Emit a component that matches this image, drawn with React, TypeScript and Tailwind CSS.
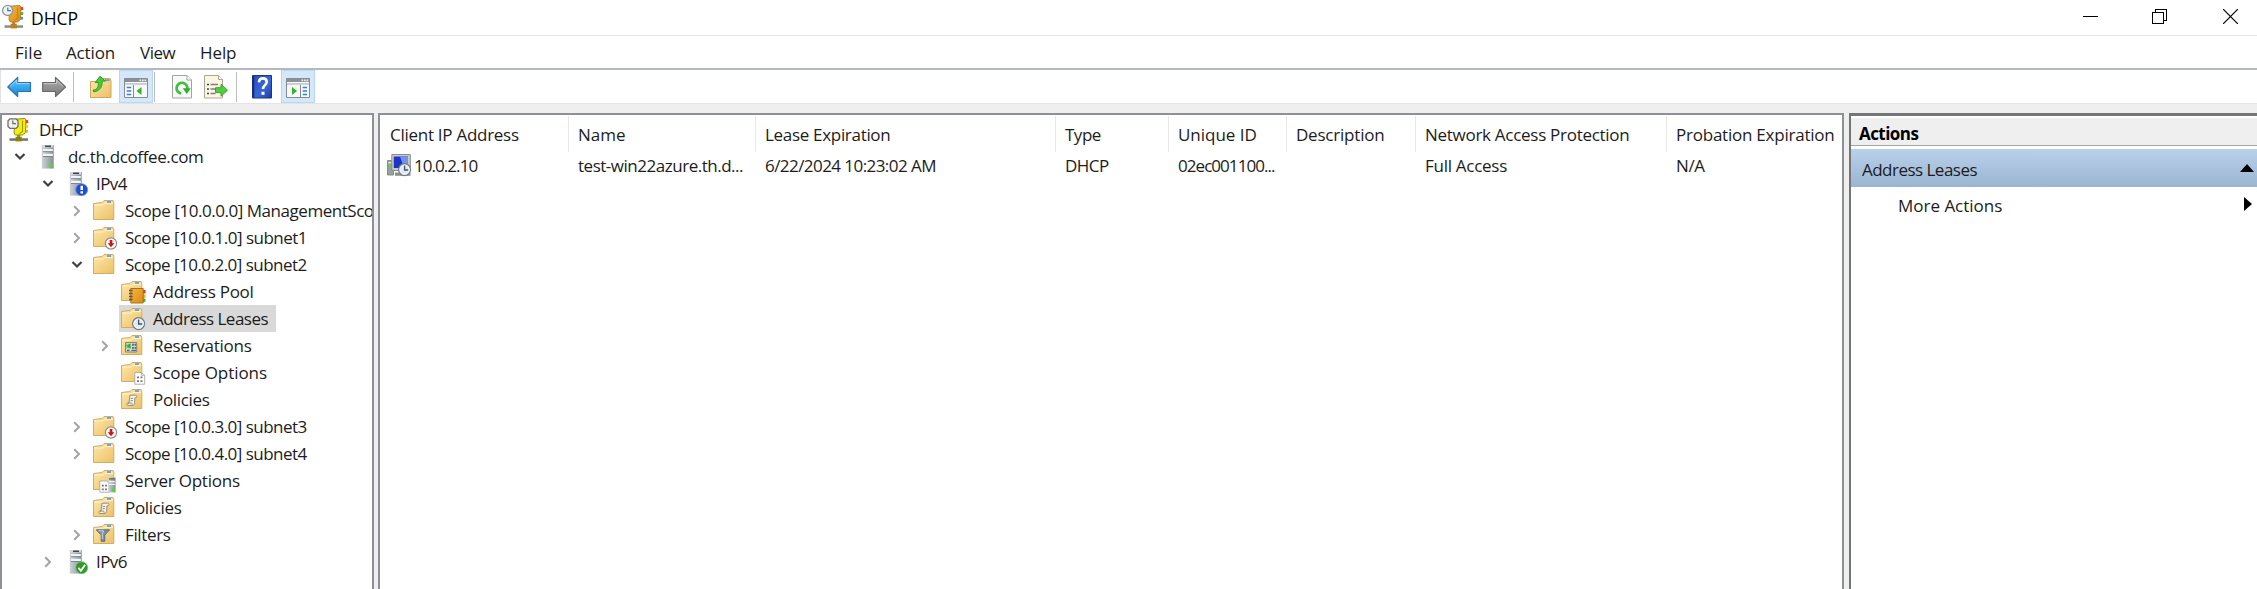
import type { ReactNode } from 'react'

function Gradients() {
  return (
    <svg className="absolute size-0" aria-hidden="true">
      <defs>
        <linearGradient id="folder" x1="0" y1="0" x2="1" y2="1">
          <stop offset="0" stopColor="#ffe8a9" />
          <stop offset="1" stopColor="#ebc067" />
        </linearGradient>
        <linearGradient id="steel" x1="0" y1="0" x2="1" y2="0">
          <stop offset="0" stopColor="#cdd3d7" />
          <stop offset="0.5" stopColor="#a9b2b8" />
          <stop offset="1" stopColor="#848e95" />
        </linearGradient>
        <linearGradient id="blueArrow" x1="0" y1="0" x2="0" y2="1">
          <stop offset="0" stopColor="#6cc5f5" />
          <stop offset="0.5" stopColor="#35aaf0" />
          <stop offset="1" stopColor="#1583d0" />
        </linearGradient>
        <linearGradient id="grayArrow" x1="0" y1="0" x2="0" y2="1">
          <stop offset="0" stopColor="#b0b0b0" />
          <stop offset="1" stopColor="#777777" />
        </linearGradient>
        <linearGradient id="book" x1="0" y1="0" x2="1" y2="1">
          <stop offset="0" stopColor="#2a4fb8" />
          <stop offset="0.6" stopColor="#3a66d6" />
          <stop offset="1" stopColor="#1d3b9a" />
        </linearGradient>
        <linearGradient id="orange" x1="0" y1="0" x2="1" y2="1">
          <stop offset="0" stopColor="#f6b53c" />
          <stop offset="1" stopColor="#d98a14" />
        </linearGradient>
      </defs>
    </svg>
  )
}

function Svg({ children }: { children: ReactNode }) {
  return (
    <svg viewBox="0 0 24 24" className="size-6 shrink-0 overflow-visible">
      {children}
    </svg>
  )
}

function FolderShape() {
  return (
    <>
      <path d="M.5 3.500 9 2.500l2-2h9l.8 2V19.500H.5z" fill="url(#folder)" stroke="#d3ab62" strokeWidth="1" />
      <path d="M11.500 1.300h8.300v2.200h-9.300z" fill="#f5dfae" />
      <path d="M14 1.200h4v1.600h-4z" fill="#4a9bea" />
      <path d="M1.300 5h9l1.400-1.400h8.400" fill="none" stroke="#fff3cd" strokeWidth="1" />
    </>
  )
}

function ServerShape() {
  return (
    <>
      <path d="M5.800 0h11.900v23.600H5.800z" fill="url(#steel)" />
      <path d="M6.500 0h10.500v2.500H6.500z" fill="#d3d9dd" />
      <path d="M9 .5h6v1.500H9z" fill="#3f474c" />
      <path d="M7 4h9.800v2.200H7zM7 8.800h9.800V11H7z" fill="#f1f5f7" />
      <path d="M7 6.200h9.800v.9H7zM7 11h9.800v.9H7z" fill="#7a858c" />
    </>
  )
}

function ClockBadge() {
  return (
    <>
      <circle cx="17.600" cy="15.600" r="5.900" fill="#dfe9f2" stroke="#747d84" strokeWidth="1.400" />
      <circle cx="17.600" cy="15.600" r="4.700" fill="none" stroke="#fff" strokeWidth="0.900" />
      <path d="M17.600 11.600v4.400h3.600" fill="none" stroke="#3b5570" strokeWidth="1.300" />
    </>
  )
}

function DhcpIcon({ yellow }: { yellow?: boolean }) {
  return (
    <Svg>
      <path d="M10.200 16h3v4h-3z" fill="#8a8a83" />
      <path d="M2.500 20.300h18.500v2.500H2.500z" fill={yellow ? '#73736a' : '#8b8b88'} />
      <path d="M8.600 18.800h6.200v4.600H8.600z" fill={yellow ? '#8a8200' : '#c27f16'} />
      <path d="M8 1.200 18 .5l1 1.500-.6 12.800-3 2.200H8.400L7 14.500z" fill={yellow ? '#f4ee12' : 'url(#orange)'} stroke={yellow ? '#87800b' : '#b67a1d'} strokeWidth="0.900" />
      <path d="M15.500 2.500v11l-3 2" fill="none" stroke={yellow ? '#a59c00' : '#c7831a'} strokeWidth="1.100" />
      <path d="M18.800 2h2l.7 2.800-2.700.6z" fill="#ee3d31" />
      <path d="M18.800 7h2.400v3h-2.400z" fill={yellow ? '#dede10' : '#55b13f'} />
      <path d="M18.600 11.800h2.300v2.800h-2.300z" fill={yellow ? '#c5be09' : '#3d8fdd'} />
      {yellow ? (
        <path d="M3 .8h6l2 2v5.600l-2 2H3l-2-2V2.800z" fill="#f1f2ee" stroke="#6d6d69" strokeWidth="1.300" />
      ) : (
        <circle cx="5.600" cy="5.400" r="5" fill="#edf4f8" stroke="#8a98a1" strokeWidth="1.300" />
      )}
      <path d="M5.800 2.400v3.300h3.200" fill="none" stroke="#5f6d76" strokeWidth="1.200" />
    </Svg>
  )
}

function ServerIcon() {
  return (
    <Svg>
      <ServerShape />
      <path d="M12.700 19.200h3.700v2.700h-3.700z" fill="#55e019" />
    </Svg>
  )
}

function Ipv4Icon() {
  return (
    <Svg>
      <ServerShape />
      <circle cx="17.700" cy="17.700" r="6" fill="#1f4fd0" stroke="#6f8fdc" strokeWidth="0.800" />
      <path d="M16.500 13.800h2.500v4.300h-2.500zM16.500 19.200h2.500v2.200h-2.500z" fill="#fff" />
    </Svg>
  )
}

function Ipv6Icon() {
  return (
    <Svg>
      <ServerShape />
      <circle cx="17.700" cy="17.700" r="6" fill="#2c9c27" stroke="#7fbd78" strokeWidth="0.800" />
      <path d="m14.400 17.800 2.500 2.900 4.200-5.800" fill="none" stroke="#fff" strokeWidth="1.800" />
    </Svg>
  )
}

function FolderIcon() {
  return (
    <Svg>
      <FolderShape />
    </Svg>
  )
}

function DownFolderIcon() {
  return (
    <Svg>
      <FolderShape />
      <circle cx="18" cy="16.500" r="5.600" fill="#fff" stroke="#8e8e8e" strokeWidth="1.200" />
      <path d="M16.700 13h2.700v3.300h2L18 20.200l-3.300-3.900h2z" fill="#d21414" />
    </Svg>
  )
}

function PoolIcon() {
  return (
    <Svg>
      <FolderShape />
      <path d="M22 9h2.600v3.500H22z" fill="#e33a2c" />
      <path d="M22 13.600h2.600v3.200H22z" fill="#e8b32b" />
      <path d="M22 17.600h2.400v3.200H22z" fill="#4aa04a" />
      <path d="M9.800 7.500h12.400V22H9.800z" fill="url(#orange)" stroke="#a86f16" strokeWidth="1" />
      <path d="M8 9.500h3.600M8 12.500h3.600M8 15.500h3.600M8 18.500h3.600" stroke="#5b5448" strokeWidth="1.300" />
    </Svg>
  )
}

function LeasesIcon() {
  return (
    <Svg>
      <FolderShape />
      <ClockBadge />
    </Svg>
  )
}

function ReservationsIcon() {
  return (
    <Svg>
      <FolderShape />
      <path d="M4.500 7.500h11.200v9.500H4.500z" fill="#d3d8d8" stroke="#7d7a68" strokeWidth="0.900" />
      <path d="M5.200 8.800h4.800v4.800H5.200z" fill="#8ed284" />
      <path d="M9.500 8.600v4.800L5.200 11z" fill="#2fae26" />
      <path d="M11 8.800h1.800v2H11zM13.500 8.800h1.600v2h-1.600zM11 12h1.800v1.800H11zM13.500 12h1.600v1.800h-1.600zM6 14.800h2.500v1.200H6zM10.500 14.800h4.500v1.200h-4.500z" fill="#4d6682" />
    </Svg>
  )
}

function ScopeOptionsIcon() {
  return (
    <Svg>
      <FolderShape />
      <path d="M13.800 10.500h6.700l3.200 2.800v8.900h-9.900z" fill="#fff" stroke="#a9a9a9" strokeWidth="0.900" />
      <path d="M20.500 10.500v2.800h3.200" fill="none" stroke="#a9a9a9" strokeWidth="0.900" />
      <path d="M16 14.500h2v1.700h-2zM19.500 14.500h2v1.700h-2zM16 18.300h2V20h-2zM19.500 18.300h2V20h-2z" fill="#777" />
    </Svg>
  )
}

function PoliciesIcon() {
  return (
    <Svg>
      <FolderShape />
      <path d="M9 6.200h5.600c1.700.1 1.800 2.300.3 2.600h-1l-.3 5.700c-.3 1.300-1 2-2.300 2H7c-1.600-.2-1.600-2.200-.2-2.500H8z" fill="#f2f1ec" stroke="#8d8775" strokeWidth="0.900" />
      <path d="M7 14.100h3.500c.8 0 .9 1.500.3 2.200M9.800 9.500h2.300M9.600 11.600h2.300" fill="none" stroke="#8d8775" strokeWidth="0.900" />
    </Svg>
  )
}

function ServerOptionsIcon() {
  return (
    <Svg>
      <FolderShape />
      <path d="M6.800 11h6.500l3 2.500v8.700H6.800z" fill="#fff" stroke="#a9a9a9" strokeWidth="0.900" />
      <path d="M8.800 14.800h2v1.700h-2zM12 14.800h2v1.700h-2zM8.800 18.500h2v1.700h-2zM12 18.500h2v1.700h-2z" fill="#777" />
      <path d="M15.200 7.500h7.400v14.900h-7.400z" fill="url(#steel)" />
      <path d="M16 8.300h5.800v1.200H16z" fill="#566068" />
      <path d="M16 11h5.800v1.200H16zM16 13.800h5.800V15H16z" fill="#f1f4f6" />
      <path d="M18.700 18.700h3.200v2.500h-3.200z" fill="#51dc1b" />
    </Svg>
  )
}

function FiltersIcon() {
  return (
    <Svg>
      <FolderShape />
      <path d="M3.200 5.800h13.400L11.800 11v6.300H8.200V11z" fill="#7690a6" stroke="#52687b" strokeWidth="0.900" />
      <path d="M5.500 6.800h5L9.300 10v5" fill="none" stroke="#c9d8e3" strokeWidth="1" />
    </Svg>
  )
}

function ClientIcon() {
  return (
    <Svg>
      <path d="M.5 6.500h6V21h-6z" fill="#9ba0a1" stroke="#73787a" strokeWidth="0.800" />
      <path d="M1.300 8h4v1.400h-4z" fill="#dfe3e3" />
      <path d="M1.500 10.500h2.600v2H1.500z" fill="#4fe01d" />
      <path d="M4.800.5h18.500v16H4.800z" fill="#c9c9c6" stroke="#8b8b89" strokeWidth="1" />
      <path d="M6.800 2.500h14.200V14H6.800z" fill="#1c35c9" />
      <path d="m13 2.500 8 0V14h-4z" fill="#6f93ef" />
      <path d="M8 18.500h15.500v3.300H8z" fill="#8a8f93" />
      <ClockBadge />
    </Svg>
  )
}

function BackIcon() {
  return (
    <Svg>
      <path d="M.8 12 10.700 2.500v5H23.500v9H10.700v5z" fill="url(#blueArrow)" stroke="#2c73a8" strokeWidth="1.200" strokeLinejoin="round" />
      <path d="M3 11.500 9.700 5v3.600h12.700" fill="none" stroke="#a5defa" strokeWidth="0.900" />
    </Svg>
  )
}

function ForwardIcon() {
  return (
    <Svg>
      <path d="M23.500 12 13.500 2.500v5H.7v9h12.800v5z" fill="url(#grayArrow)" stroke="#686868" strokeWidth="1.200" strokeLinejoin="round" />
      <path d="M1.800 8.600h12.800V5l6.600 6.400" fill="none" stroke="#c9c9c9" strokeWidth="0.900" />
    </Svg>
  )
}

function UpFolderIcon() {
  return (
    <Svg>
      <path d="M1.500 6.500h9l2-3h8.600l.9 2.500V22.500H1.500z" fill="url(#folder)" stroke="#cfa65d" />
      <path d="M16 4.300h4.500v1.600H16z" fill="#4a9bea" />
      <path d="M4 15.200c4.200-.4 5.600-3 5.400-7.600H6.200L11 1.200l5.400 4.900h-3.300c.5 6-2.400 9.900-8.300 10.800z" fill="#49cb35" stroke="#279a1b" strokeWidth="0.900" />
    </Svg>
  )
}

function PaneIcon({ right }: { right?: boolean }) {
  return (
    <Svg>
      <path d="M.5 3.500h23v19H.5z" fill="#f7f8f9" stroke="#868b90" />
      <path d="M1 4h22v3H1z" fill="#8b9197" />
      <path d="M1 8h22v1.800H1z" fill="#c6cbd0" />
      <path d="M15.500 4.500h1.700v1.700h-1.700zM18 4.500h1.700v1.700H18zM20.500 4.500h1.700v1.700h-1.700z" fill="#e9edf0" />
      {right ? (
        <>
          <path d="M14.500 10v12.500" stroke="#868b90" />
          <path d="M16.700 12.500h4.300M16.700 16h4.300M16.700 19.500h4.300" stroke="#3b7fd0" strokeWidth="1.700" />
          <path d="M6 12v8l5-4z" fill="#35b324" />
        </>
      ) : (
        <>
          <path d="M9.500 10v12.500" stroke="#868b90" />
          <path d="M2.700 12.500h4.500M2.700 16h4.500M2.700 19.500h4.500" stroke="#3b7fd0" strokeWidth="1.700" />
          <path d="M17.500 12v8l-5-4z" fill="#35b324" />
        </>
      )}
    </Svg>
  )
}

function RefreshIcon() {
  return (
    <Svg>
      <path d="M2.500.5h14.500l4.500 4.500v18h-19z" fill="#f8f8f6" stroke="#a3a3a3" />
      <path d="M17 .5V5h4.500" fill="#fff" stroke="#a3a3a3" />
      <path d="M11.200 18.500A5.400 5.400 0 1 1 17.300 14" fill="none" stroke="#3fc040" strokeWidth="2.700" />
      <path d="m12.800 13.300h8l-4 5.700z" fill="#2dae2c" />
    </Svg>
  )
}

function ExportIcon() {
  return (
    <Svg>
      <path d="M1.500.5h14l4 4v18.500h-18z" fill="#fbf6df" stroke="#aaa69a" />
      <path d="M15.500.5v4h4" fill="#fff" stroke="#aaa69a" />
      <path d="M4 9.500h2M4 14h2M4 18.500h2" stroke="#444" strokeWidth="1.500" />
      <path d="M7.500 9.500h7.500M7.500 14h5M7.500 18.500h5" stroke="#7d7d8c" strokeWidth="1.300" />
      <path d="M12.500 12.700h5.500V9.200l6.500 6-6.500 6v-3.600h-5.500z" fill="#52cc3f" stroke="#2f9e22" strokeWidth="0.900" />
    </Svg>
  )
}

function HelpIcon() {
  return (
    <Svg>
      <path d="M2.500.5h19V23h-19z" fill="url(#book)" stroke="#1b358a" />
      <path d="M3.500 1v21.500" stroke="#152c78" strokeWidth="1.600" />
      <path d="M9 7.400c.1-2.600 1.500-4 3.800-4 2.400 0 3.900 1.400 3.900 3.500 0 3.300-3.700 3.300-3.700 7.200" fill="none" stroke="#fff" strokeWidth="2.600" />
      <path d="M11.500 16.800h3v3h-3z" fill="#fff" />
    </Svg>
  )
}

type Node = {
  label: string
  track: string
  indent: string
  icon: ReactNode
  state?: 'open' | 'closed'
  selected?: boolean
}

const L1 = 'pl-[7px]'
const L2 = 'pl-[35px]'
const L3 = 'pl-[64px]'
const L4 = 'pl-[92px]'

const nodes: Node[] = [
  { label: 'DHCP', track: 'tracking-[-0.5px]', indent: 'pl-0', icon: <DhcpIcon yellow /> },
  { label: 'dc.th.dcoffee.com', track: 'tracking-[-0.38px]', indent: L1, icon: <ServerIcon />, state: 'open' },
  { label: 'IPv4', track: 'tracking-[-0.55px]', indent: L2, icon: <Ipv4Icon />, state: 'open' },
  { label: 'Scope [10.0.0.0] ManagementScope', track: 'tracking-[-0.46px]', indent: L3, icon: <FolderIcon />, state: 'closed' },
  { label: 'Scope [10.0.1.0] subnet1', track: 'tracking-[-0.51px]', indent: L3, icon: <DownFolderIcon />, state: 'closed' },
  { label: 'Scope [10.0.2.0] subnet2', track: 'tracking-[-0.52px]', indent: L3, icon: <FolderIcon />, state: 'open' },
  { label: 'Address Pool', track: 'tracking-[-0.25px]', indent: L4, icon: <PoolIcon /> },
  { label: 'Address Leases', track: 'tracking-[-0.52px]', indent: L4, icon: <LeasesIcon />, selected: true },
  { label: 'Reservations', track: 'tracking-[-0.26px]', indent: L4, icon: <ReservationsIcon />, state: 'closed' },
  { label: 'Scope Options', track: 'tracking-[-0.06px]', indent: L4, icon: <ScopeOptionsIcon /> },
  { label: 'Policies', track: 'tracking-[-0.33px]', indent: L4, icon: <PoliciesIcon /> },
  { label: 'Scope [10.0.3.0] subnet3', track: 'tracking-[-0.52px]', indent: L3, icon: <DownFolderIcon />, state: 'closed' },
  { label: 'Scope [10.0.4.0] subnet4', track: 'tracking-[-0.52px]', indent: L3, icon: <FolderIcon />, state: 'closed' },
  { label: 'Server Options', track: 'tracking-[-0.22px]', indent: L3, icon: <ServerOptionsIcon /> },
  { label: 'Policies', track: 'tracking-[-0.33px]', indent: L3, icon: <PoliciesIcon /> },
  { label: 'Filters', track: 'tracking-[-0.35px]', indent: L3, icon: <FiltersIcon />, state: 'closed' },
  { label: 'IPv6', track: 'tracking-[-0.55px]', indent: L2, icon: <Ipv6Icon />, state: 'closed' },
]

function TreeRow({ node, root }: { node: Node; root?: boolean }) {
  const deep = node.indent === L3 || node.indent === L4
  return (
    <li className={`flex h-[27px] items-center whitespace-nowrap ${node.indent}`}>
      {!root && (
        <span className="flex w-[21px] shrink-0 justify-center">
          {node.state === 'open' && (
            <svg viewBox="0 0 12 8" className="h-2 w-3">
              <path d="m1.500 1 4.500 4.500L10.500 1" fill="none" stroke="#404040" strokeWidth="2.200" />
            </svg>
          )}
          {node.state === 'closed' && (
            <svg viewBox="0 0 8 12" className="h-3 w-2">
              <path d="M1.200 1.200 6 6 1.200 10.800" fill="none" stroke="#a3a3a3" strokeWidth="2" />
            </svg>
          )}
        </span>
      )}
      <span className={`flex h-[27px] items-center pr-2 pl-0.5 ${root ? 'ml-[3px]' : 'ml-1'} ${node.selected ? 'bg-[#d9d9d9]' : ''}`}>
        <span className={deep ? 'pt-[3px]' : ''}>{node.icon}</span>
        <span className={`pl-2 ${node.track}`}>{node.label}</span>
      </span>
    </li>
  )
}

type Column = { head: string; headTrack: string; cell: string; cellTrack: string; width: string }

const columns: Column[] = [
  { head: 'Client IP Address', headTrack: 'tracking-[-0.27px]', cell: '10.0.2.10', cellTrack: 'tracking-[-0.95px]', width: 'w-[189px] pl-2.5' },
  { head: 'Name', headTrack: 'tracking-[0.02px]', cell: 'test-win22azure.th.d...', cellTrack: 'tracking-[-0.48px]', width: 'w-[187px] pl-[9px]' },
  { head: 'Lease Expiration', headTrack: 'tracking-[-0.31px]', cell: '6/22/2024 10:23:02 AM', cellTrack: 'tracking-[-0.56px]', width: 'w-[300px] pl-[9px]' },
  { head: 'Type', headTrack: 'tracking-[-0.5px]', cell: 'DHCP', cellTrack: 'tracking-[-0.5px]', width: 'w-[113px] pl-[9px]' },
  { head: 'Unique ID', headTrack: 'tracking-[-0.03px]', cell: '02ec001100...', cellTrack: 'tracking-[-0.95px]', width: 'w-[118px] pl-[9px]' },
  { head: 'Description', headTrack: 'tracking-[-0.21px]', cell: '', cellTrack: '', width: 'w-[129px] pl-[9px]' },
  { head: 'Network Access Protection', headTrack: 'tracking-[-0.28px]', cell: 'Full Access', cellTrack: 'tracking-[-0.27px]', width: 'w-[251px] pl-[9px]' },
  { head: 'Probation Expiration', headTrack: 'tracking-[-0.23px]', cell: 'N/A', cellTrack: 'tracking-[-0.36px]', width: 'w-[174px] pl-[9px]' },
]

function ToolSeparator() {
  return <span className="block h-[30px] w-px bg-[#bdbdbd]" />
}

export default function App() {
  return (
    <div className="flex h-[589px] w-[2257px] flex-col overflow-hidden bg-[#efefef] font-['Open_Sans','Noto_Sans',sans-serif] text-[17px] leading-[27px] text-[#1c1c1c]">
      <Gradients />
      <header className="flex h-9 shrink-0 items-center border-b border-[#e6e6e6] bg-white">
        <div className="-mt-0.5 ml-0.5">
          <DhcpIcon />
        </div>
        <h1 className="pt-px pl-[5px] text-[17.5px] tracking-[-0.05px] text-black">DHCP</h1>
        <div className="mr-[19px] -mt-0.5 ml-auto flex items-center text-black">
          <svg viewBox="0 0 15 15" className="mr-[54px] size-[15px]" shapeRendering="crispEdges">
            <path d="M0 7h15v1H0z" fill="currentColor" />
          </svg>
          <svg viewBox="0 0 15 15" className="mr-14 size-[15px]" shapeRendering="crispEdges">
            <path d="M.5 3.500h11v11H.5zM3.500 3.500v-3h11v11h-3" fill="none" stroke="currentColor" />
          </svg>
          <svg viewBox="0 0 15 15" className="size-[15px]">
            <path d="m0 0 15 15M15 0 0 15" fill="none" stroke="currentColor" strokeWidth="1.200" />
          </svg>
        </div>
      </header>

      <nav className="flex h-[34px] shrink-0 items-center border-b-2 border-[#b4b9bd] bg-white pl-[15px]">
        <span className="w-[51px] tracking-[0.1px]">File</span>
        <span className="w-[74px] tracking-[-0.14px]">Action</span>
        <span className="w-[60px] tracking-[-0.45px]">View</span>
        <span className="tracking-[-0.1px]">Help</span>
      </nav>

      <div className="flex h-[33px] shrink-0 items-center border-l border-[#e2e2e2] bg-white">
        <span className="ml-1.5"><BackIcon /></span>
        <span className="ml-[11px]"><ForwardIcon /></span>
        <span className="ml-[7px]"><ToolSeparator /></span>
        <span className="ml-[15px]"><UpFolderIcon /></span>
        <span className="ml-1.5 flex h-[33px] w-[34px] items-center justify-center border border-[#b4d8f8] bg-[#d5e8fa]">
          <PaneIcon />
        </span>
        <span className="ml-px"><ToolSeparator /></span>
        <span className="ml-[15px]"><RefreshIcon /></span>
        <span className="ml-[9px]"><ExportIcon /></span>
        <span className="ml-[9px]"><ToolSeparator /></span>
        <span className="ml-[13px]"><HelpIcon /></span>
        <span className="ml-[7px] flex h-[33px] w-[34px] items-center justify-center border border-[#b4d8f8] bg-[#d5e8fa]">
          <PaneIcon right />
        </span>
      </div>

      <main className="flex min-h-0 grow border-t border-[#e4e4e4] pt-[9px]">
        <ul className="w-[374px] shrink-0 overflow-hidden border-2 border-b-0 border-[#8d9099] bg-white pt-px">
          {nodes.map((node, i) => (
            <TreeRow key={i} node={node} root={i === 0} />
          ))}
        </ul>

        <section className="ml-1 w-[1466px] shrink-0 overflow-hidden border-2 border-b-0 border-[#8d9099] bg-white pt-px">
          <div className="flex h-9">
            {columns.map((c) => (
              <div key={c.head} className={`shrink-0 border-r border-[#e8e8e8] pt-[5px] whitespace-nowrap last:border-r-0 ${c.width}`}>
                <span className={c.headTrack}>{c.head}</span>
              </div>
            ))}
          </div>
          <div className="flex h-[30px]">
            {columns.map((c, i) => (
              <div key={c.head} className={`flex shrink-0 items-center pb-[3px] whitespace-nowrap ${c.width}`}>
                {i === 0 && <span className="-ml-[3px] pr-[3px]"><ClientIcon /></span>}
                <span className={c.cellTrack}>{c.cell}</span>
              </div>
            ))}
          </div>
        </section>

        <aside className="ml-[5px] flex grow flex-col border-t-[3px] border-l-2 border-[#737577] bg-white pt-0.5">
          <h2 className="h-7 border-b border-[#a5a5a5] bg-[#efefef] pl-2 leading-[32px] font-bold tracking-[-0.55px] text-black">Actions</h2>
          <div className="mt-[3px] flex h-[38px] items-center justify-between bg-linear-to-b from-[#b9d1ea] to-[#9bb4d1] pr-[3px] pl-[11px]">
            <span className="pt-0.5 tracking-[-0.52px]">Address Leases</span>
            <svg viewBox="0 0 14 8" className="h-2 w-3.5">
              <path d="M0 8 7 0l7 8z" fill="#000" />
            </svg>
          </div>
          <div className="flex h-[37px] items-center justify-between pr-[5px] pl-[47px]">
            <span className="tracking-[-0.01px]">More Actions</span>
            <svg viewBox="0 0 8 14" className="mb-[3px] h-3.5 w-2">
              <path d="M0 0v14l8-7z" fill="#000" />
            </svg>
          </div>
        </aside>
      </main>
    </div>
  )
}
